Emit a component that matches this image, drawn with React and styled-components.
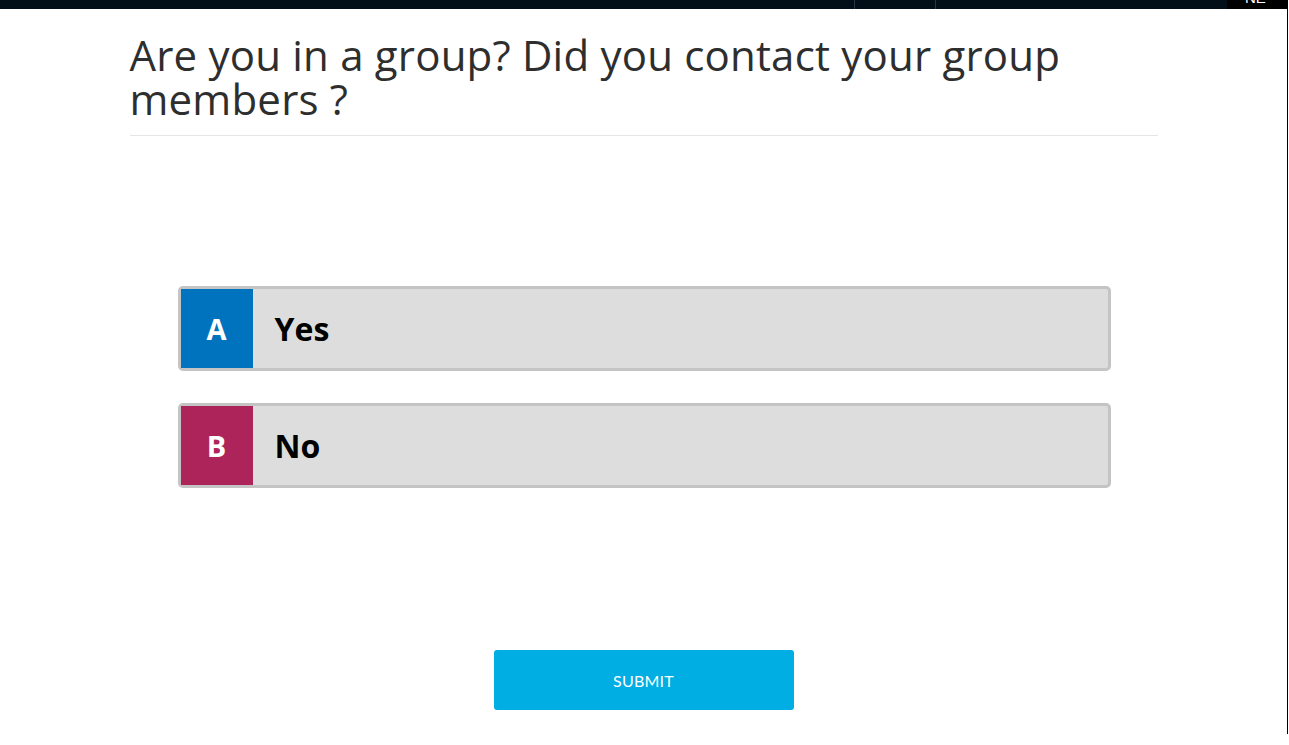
import React, { useState } from "react";
import styled, { createGlobalStyle } from "styled-components";

const GlobalStyle = createGlobalStyle`
  html, body {
    margin: 0;
    padding: 0;
    background: #ffffff;
  }
  body {
    font-family: "Open Sans", "Lato", sans-serif;
  }
`;

// Page frame
const Page = styled.div`
  width: 1287px;
  height: 734px;
  border-right: 1px solid #000;
  display: flex;
  flex-direction: column;
  overflow: hidden;
`;

const TopBar = styled.div`
  height: 9px;
  background: #020e18;
  display: flex;
  flex-shrink: 0;
`;

const BarSpacer = styled.div`
  flex: ${(p) => (p.$grow ? 1 : "none")};
  width: ${(p) => (p.$width ? `${p.$width}px` : "auto")};
  border-right: ${(p) => (p.$divider ? "1px solid #2b3642" : "none")};
`;

const LangBox = styled.div`
  width: 60px;
  background: #000;
  color: #fff;
  font-family: "Liberation Sans", sans-serif;
  font-size: 15px;
  line-height: 1;
  position: relative;
  overflow: hidden;
  span {
    position: absolute;
    left: 18px;
    top: -10px;
  }
`;

const Container = styled.div`
  width: 1028px;
  margin: 0 auto;
  display: flex;
  flex-direction: column;
`;

const Title = styled.h1`
  margin: 0;
  padding-top: 24px;
  padding-bottom: 14px;
  font-family: "Open Sans", sans-serif;
  font-size: 42px;
  font-weight: 400;
  line-height: 44px;
  letter-spacing: 0.2px;
  color: #2e2e2e;
  border-bottom: 1px solid #e6e6e6;
`;

const Options = styled.div`
  display: flex;
  flex-direction: column;
  gap: 32px;
  padding: 150px 47px 0 48px;
`;

const Option = styled.button`
  display: flex;
  align-items: stretch;
  height: 85px;
  padding: 0;
  border: 3px solid #c4c4c4;
  border-radius: 5px;
  background: #dddddd;
  cursor: pointer;
  font-family: inherit;
  text-align: left;
  outline: ${(p) => (p.$selected ? "2px solid #00aee3" : "none")};
`;

const Letter = styled.span`
  width: 72px;
  background: ${(p) => p.$color};
  color: #fff;
  font-size: 29px;
  font-weight: 700;
  display: flex;
  align-items: center;
  justify-content: center;
`;

const Label = styled.span`
  display: flex;
  align-items: center;
  padding-left: 22px;
  font-size: 32px;
  font-weight: 700;
  color: #000;
`;

const SubmitRow = styled.div`
  display: flex;
  justify-content: center;
  padding-top: 162px;
`;

const SubmitButton = styled.button`
  width: 300px;
  height: 60px;
  border: none;
  border-radius: 3px;
  background: #00aee3;
  color: #fff;
  font-family: "Lato", sans-serif;
  font-size: 16px;
  font-weight: 400;
  letter-spacing: 0.2px;
  cursor: pointer;
`;

const answers = [
  { key: "A", text: "Yes", color: "#0073bf" },
  { key: "B", text: "No", color: "#ad245a" },
];

export default function App() {
  const [selected, setSelected] = useState(null);

  return (
    <>
      <GlobalStyle />
      <Page>
        <TopBar>
          <BarSpacer $width={854} $divider />
          <BarSpacer $width={80} $divider />
          <BarSpacer $grow />
          <LangBox>
            <span>NE</span>
          </LangBox>
        </TopBar>
        <Container>
          <Title>Are you in a group? Did you contact your group members ?</Title>
          <Options>
            {answers.map((a) => (
              <Option
                key={a.key}
                $selected={selected === a.key}
                onClick={() => setSelected(a.key)}
              >
                <Letter $color={a.color}>{a.key}</Letter>
                <Label>{a.text}</Label>
              </Option>
            ))}
          </Options>
          <SubmitRow>
            <SubmitButton>SUBMIT</SubmitButton>
          </SubmitRow>
        </Container>
      </Page>
    </>
  );
}
